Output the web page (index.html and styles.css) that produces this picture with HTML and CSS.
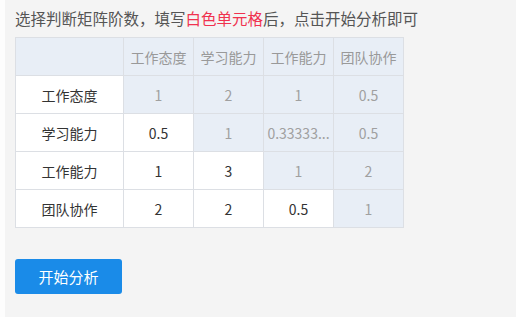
FILE: index.html
```html
<!DOCTYPE html>
<html lang="zh-CN">
<head>
  <meta charset="UTF-8">
  <meta name="viewport" content="width=device-width, initial-scale=1.0">
  <title>判断矩阵</title>
  <link rel="stylesheet" href="styles.css">
</head>
<body>
  <main class="panel">
    <p class="tip">选择判断矩阵阶数，填写<span class="tip-mark">白色单元格</span>后，点击开始分析即可</p>

    <!-- 判断矩阵 -->
    <table class="matrix">
      <colgroup>
        <col class="col-name">
        <col class="col-val">
        <col class="col-val">
        <col class="col-val">
        <col class="col-val">
      </colgroup>
      <thead>
        <tr>
          <th></th>
          <th>工作态度</th>
          <th>学习能力</th>
          <th>工作能力</th>
          <th>团队协作</th>
        </tr>
      </thead>
      <tbody>
        <tr>
          <td class="name">工作态度</td>
          <td class="fixed">1</td>
          <td class="fixed">2</td>
          <td class="fixed">1</td>
          <td class="fixed">0.5</td>
        </tr>
        <tr>
          <td class="name">学习能力</td>
          <td>0.5</td>
          <td class="fixed">1</td>
          <td class="fixed">0.33333...</td>
          <td class="fixed">0.5</td>
        </tr>
        <tr>
          <td class="name">工作能力</td>
          <td>1</td>
          <td>3</td>
          <td class="fixed">1</td>
          <td class="fixed">2</td>
        </tr>
        <tr>
          <td class="name">团队协作</td>
          <td>2</td>
          <td>2</td>
          <td>0.5</td>
          <td class="fixed">1</td>
        </tr>
      </tbody>
    </table>

    <button class="btn-start" type="button">开始分析</button>
  </main>
</body>
</html>
```

FILE: styles.css
```css
/* 页面基础 */
body {
  margin: 0;
  background: #fdfdfd;
  font-family: "Noto Sans CJK SC", "Noto Sans", sans-serif;
  color: #333;
}

.panel {
  margin-left: 5px;
  min-height: 317px;
  box-sizing: border-box;
  padding: 6px 10px 0;
  background: #f4f4f4;
}

/* 提示文字 */
.tip {
  margin: 0 0 7px;
  font-size: 15.5px;
  line-height: 24px;
  color: #555;
}

.tip-mark {
  color: #f0324f;
}

/* 矩阵表格 */
.matrix {
  border-collapse: collapse;
  table-layout: fixed;
  width: 389px;
  font-size: 14px;
}

.col-name {
  width: 108px;
}

.col-val {
  width: 70px;
}

.matrix th,
.matrix td {
  height: 37px;
  padding: 0;
  border: 1px solid #dcdfe4;
  text-align: center;
  white-space: nowrap;
  background: #fff;
  color: #333;
  font-weight: normal;
}

.matrix th {
  background: #e8eef6;
  color: #999;
}

.matrix td.fixed {
  background: #e8eef6;
  color: #a0a0a0;
}

/* 按钮 */
.btn-start {
  display: block;
  margin-top: 31px;
  width: 107px;
  height: 35px;
  border: none;
  border-radius: 3px;
  background: #1a8be8;
  color: #fff;
  font-family: inherit;
  font-size: 15px;
  cursor: pointer;
}

.btn-start:hover {
  background: #1278cc;
}
```
